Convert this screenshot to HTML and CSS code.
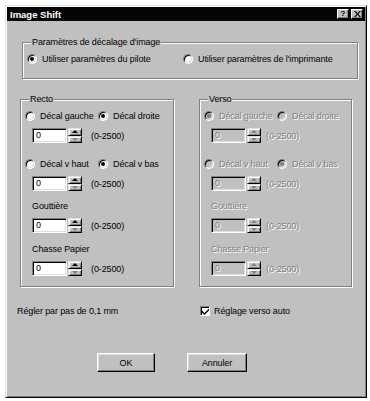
FILE: index.html
```html
<!DOCTYPE html>
<html lang="fr">
<head>
<meta charset="utf-8">
<title>Image Shift</title>
<link rel="stylesheet" href="styles.css">
</head>
<body>
<div class="window">
  <div class="titlebar">
    <span class="title">Image Shift</span>
    <div class="tbtns">
      <span class="tbtn">?</span>
      <span class="tbtn close">
        <svg width="7" height="6" viewBox="0 0 7 6"><path d="M0 0h1.6L3.5 2.2 5.4 0H7L4.3 3 7 6H5.4L3.5 3.8 1.6 6H0l2.7-3z" fill="#000"/></svg>
      </span>
    </div>
  </div>

  <fieldset class="group top">
    <legend>Paramètres de décalage d'image</legend>
    <div class="toprow">
      <label class="opt"><span class="rb on"></span>Utiliser paramètres du pilote</label>
      <label class="opt"><span class="rb"></span>Utiliser paramètres de l'imprimante</label>
    </div>
  </fieldset>

  <div class="cols">
    <fieldset class="group side">
      <legend>Recto</legend>
      <div class="radios">
        <label class="opt first"><span class="rb"></span>Décal gauche</label>
        <label class="opt"><span class="rb on"></span>Décal droite</label>
      </div>
      <div class="numrow">
        <span class="field">0</span>
        <span class="spin"><span class="sb"><i class="up"></i></span><span class="sb"><i class="down off"></i></span></span>
        <span class="range">(0-2500)</span>
      </div>
      <div class="radios second">
        <label class="opt first"><span class="rb"></span>Décal v haut</label>
        <label class="opt"><span class="rb on"></span>Décal v bas</label>
      </div>
      <div class="numrow">
        <span class="field">0</span>
        <span class="spin"><span class="sb"><i class="up"></i></span><span class="sb"><i class="down off"></i></span></span>
        <span class="range">(0-2500)</span>
      </div>
      <div class="caption first-cap">Gouttière</div>
      <div class="numrow tight">
        <span class="field">0</span>
        <span class="spin"><span class="sb"><i class="up"></i></span><span class="sb"><i class="down off"></i></span></span>
        <span class="range">(0-2500)</span>
      </div>
      <div class="caption">Chasse Papier</div>
      <div class="numrow tight">
        <span class="field">0</span>
        <span class="spin"><span class="sb"><i class="up"></i></span><span class="sb"><i class="down off"></i></span></span>
        <span class="range">(0-2500)</span>
      </div>
    </fieldset>

    <fieldset class="group side disabled">
      <legend>Verso</legend>
      <div class="radios">
        <label class="opt first"><span class="rb on"></span>Décal gauche</label>
        <label class="opt"><span class="rb"></span>Décal droite</label>
      </div>
      <div class="numrow">
        <span class="field">0</span>
        <span class="spin"><span class="sb"><i class="up off"></i></span><span class="sb"><i class="down off"></i></span></span>
        <span class="range">(0-2500)</span>
      </div>
      <div class="radios second">
        <label class="opt first"><span class="rb"></span>Décal v haut</label>
        <label class="opt"><span class="rb on"></span>Décal v bas</label>
      </div>
      <div class="numrow">
        <span class="field">0</span>
        <span class="spin"><span class="sb"><i class="up off"></i></span><span class="sb"><i class="down off"></i></span></span>
        <span class="range">(0-2500)</span>
      </div>
      <div class="caption first-cap">Gouttière</div>
      <div class="numrow tight">
        <span class="field">0</span>
        <span class="spin"><span class="sb"><i class="up off"></i></span><span class="sb"><i class="down off"></i></span></span>
        <span class="range">(0-2500)</span>
      </div>
      <div class="caption">Chasse Papier</div>
      <div class="numrow tight">
        <span class="field">0</span>
        <span class="spin"><span class="sb"><i class="up off"></i></span><span class="sb"><i class="down off"></i></span></span>
        <span class="range">(0-2500)</span>
      </div>
    </fieldset>
  </div>

  <div class="bottomrow">
    <span class="note">Régler par pas de 0,1 mm</span>
    <label class="chk"><span class="cb"><svg width="7" height="7" viewBox="0 0 7 7"><path d="M0 2.5l2.5 2.5L7 0.5V2.5L2.5 7 0 4.5z" fill="#000"/></svg></span>Réglage verso auto</label>
  </div>

  <div class="buttons">
    <span class="btn">OK</span>
    <span class="btn wide">Annuler</span>
  </div>
</div>
</body>
</html>
```

FILE: styles.css
```css
html, body {
  margin: 0;
  padding: 0;
  background: #fff;
}

body {
  font-family: "Liberation Sans", Arial, sans-serif;
  font-size: 9px;
  letter-spacing: -0.12px;
  color: #000;
}

.window {
  box-sizing: border-box;
  margin: 5px 0 0 5px;
  width: 362px;
  height: 393px;
  background: #c0c0c0;
  border: 1px solid;
  border-color: #dfdfdf #000 #000 #dfdfdf;
  box-shadow: inset 1px 1px 0 #fff, inset -1px -1px 0 #808080;
  padding: 1px;
}

.titlebar {
  height: 14px;
  background: #050505;
  display: flex;
  align-items: center;
  justify-content: space-between;
  padding: 0 2px 0 3px;
}

.title {
  color: #fff;
  font-weight: bold;
  font-size: 9.5px;
  letter-spacing: 0;
}

.tbtns {
  display: flex;
  gap: 2px;
}

.tbtn {
  box-sizing: border-box;
  width: 12px;
  height: 10px;
  background: #c0c0c0;
  border: 1px solid;
  border-color: #fff #000 #000 #fff;
  box-shadow: inset -1px -1px 0 #808080;
  font-weight: bold;
  font-size: 8px;
  line-height: 8px;
  display: flex;
  align-items: center;
  justify-content: center;
}

/* etched group boxes */
.group {
  box-sizing: border-box;
  margin: 0;
  border: 1px solid #808080;
  box-shadow: 1px 1px 0 #fff, inset 1px 1px 0 #fff;
  min-width: 0;
}

.group legend {
  padding: 0 1px;
  margin-left: 4px;
  line-height: 10px;
  height: 10px;
  background: #c0c0c0;
}

.top {
  margin: 16px 0 0 15px;
  width: 336px;
  padding: 7px 4px 14px 4px;
}

.toprow {
  display: grid;
  grid-template-columns: 156px auto;
}

.opt {
  display: flex;
  align-items: center;
  gap: 5px;
  height: 10px;
  line-height: 10px;
  white-space: nowrap;
}

.rb {
  flex: none;
  position: relative;
  box-sizing: border-box;
  width: 10px;
  height: 10px;
  border-radius: 50%;
  background: #fff;
  border: 1px solid;
  border-color: #808080 #fff #fff #808080;
  box-shadow: inset 1px 1px 0 #000, inset -1px -1px 0 #dfdfdf;
}

.rb.on::after {
  content: "";
  position: absolute;
  left: 2px;
  top: 2px;
  width: 4px;
  height: 4px;
  border-radius: 50%;
  background: #000;
}

.cols {
  display: flex;
  gap: 25px;
  margin: 15px 0 0 13px;
}

.side {
  width: 154px;
  padding: 7px 4px 10px 4px;
}

.side.disabled {
  width: 153px;
}

.radios {
  display: flex;
  height: 10px;
}

.radios.second {
  margin-top: 16px;
}

.opt.first {
  width: 69px;
  overflow: hidden;
  margin-right: 4px;
}

.numrow {
  display: flex;
  align-items: center;
  margin: 7px 0 0 7px;
  height: 15px;
}

.numrow.tight {
  margin-top: 7px;
}

.field {
  box-sizing: border-box;
  width: 35px;
  height: 15px;
  background: #fff;
  border: 1px solid;
  border-color: #808080 #fff #fff #808080;
  box-shadow: inset 1px 1px 0 #000, inset -1px -1px 0 #dfdfdf;
  padding-left: 3px;
  line-height: 13px;
}

.spin {
  box-sizing: border-box;
  margin-left: 1px;
  width: 14px;
  height: 15px;
  display: flex;
  flex-direction: column;
}

.sb {
  flex: 1;
  box-sizing: border-box;
  background: #c0c0c0;
  border: 1px solid;
  border-color: #dfdfdf #000 #000 #dfdfdf;
  box-shadow: inset 1px 1px 0 #fff, inset -1px -1px 0 #808080;
  display: flex;
  align-items: center;
  justify-content: center;
}

.sb i {
  width: 0;
  height: 0;
  border-left: 3px solid transparent;
  border-right: 3px solid transparent;
}

.sb i.up {
  border-bottom: 3px solid #000;
}

.sb i.down {
  border-top: 3px solid #000;
}

.sb i.up.off {
  border-bottom-color: #808080;
}

.sb i.down.off {
  border-top-color: #808080;
}

.range {
  margin-left: 9px;
}

.disabled .range {
  margin-left: 5px;
}

.caption {
  margin: 11px 0 0 7px;
  height: 10px;
  line-height: 10px;
}

.caption.first-cap {
  margin-top: 10px;
}

/* disabled look */
.disabled .opt,
.disabled .caption,
.disabled .range,
.disabled .field {
  color: #808080;
  text-shadow: 1px 1px 0 #fff;
}

.disabled legend {
  color: #000;
  text-shadow: none;
}

.disabled .field {
  background: #c0c0c0;
}

.disabled .rb {
  background: #c0c0c0;
}

.disabled .rb.on::after {
  background: #808080;
}

.bottomrow {
  display: grid;
  grid-template-columns: 183px auto;
  margin: 19px 0 0 10px;
  height: 10px;
  line-height: 10px;
}

.chk {
  display: flex;
  align-items: center;
  gap: 4px;
}

.cb {
  box-sizing: border-box;
  width: 10px;
  height: 10px;
  background: #fff;
  border: 1px solid;
  border-color: #808080 #fff #fff #808080;
  box-shadow: inset 1px 1px 0 #000;
  display: flex;
  align-items: center;
  justify-content: center;
  padding: 1px 0 0 1px;
}

.buttons {
  display: flex;
  gap: 32px;
  margin: 37px 0 0 90px;
}

.btn {
  box-sizing: border-box;
  width: 58px;
  height: 19px;
  background: #c0c0c0;
  border: 1px solid;
  border-color: #fff #000 #000 #fff;
  box-shadow: inset -1px -1px 0 #808080, inset 1px 1px 0 #dfdfdf;
  display: flex;
  align-items: center;
  justify-content: center;
}

.btn.wide {
  width: 60px;
}
```
